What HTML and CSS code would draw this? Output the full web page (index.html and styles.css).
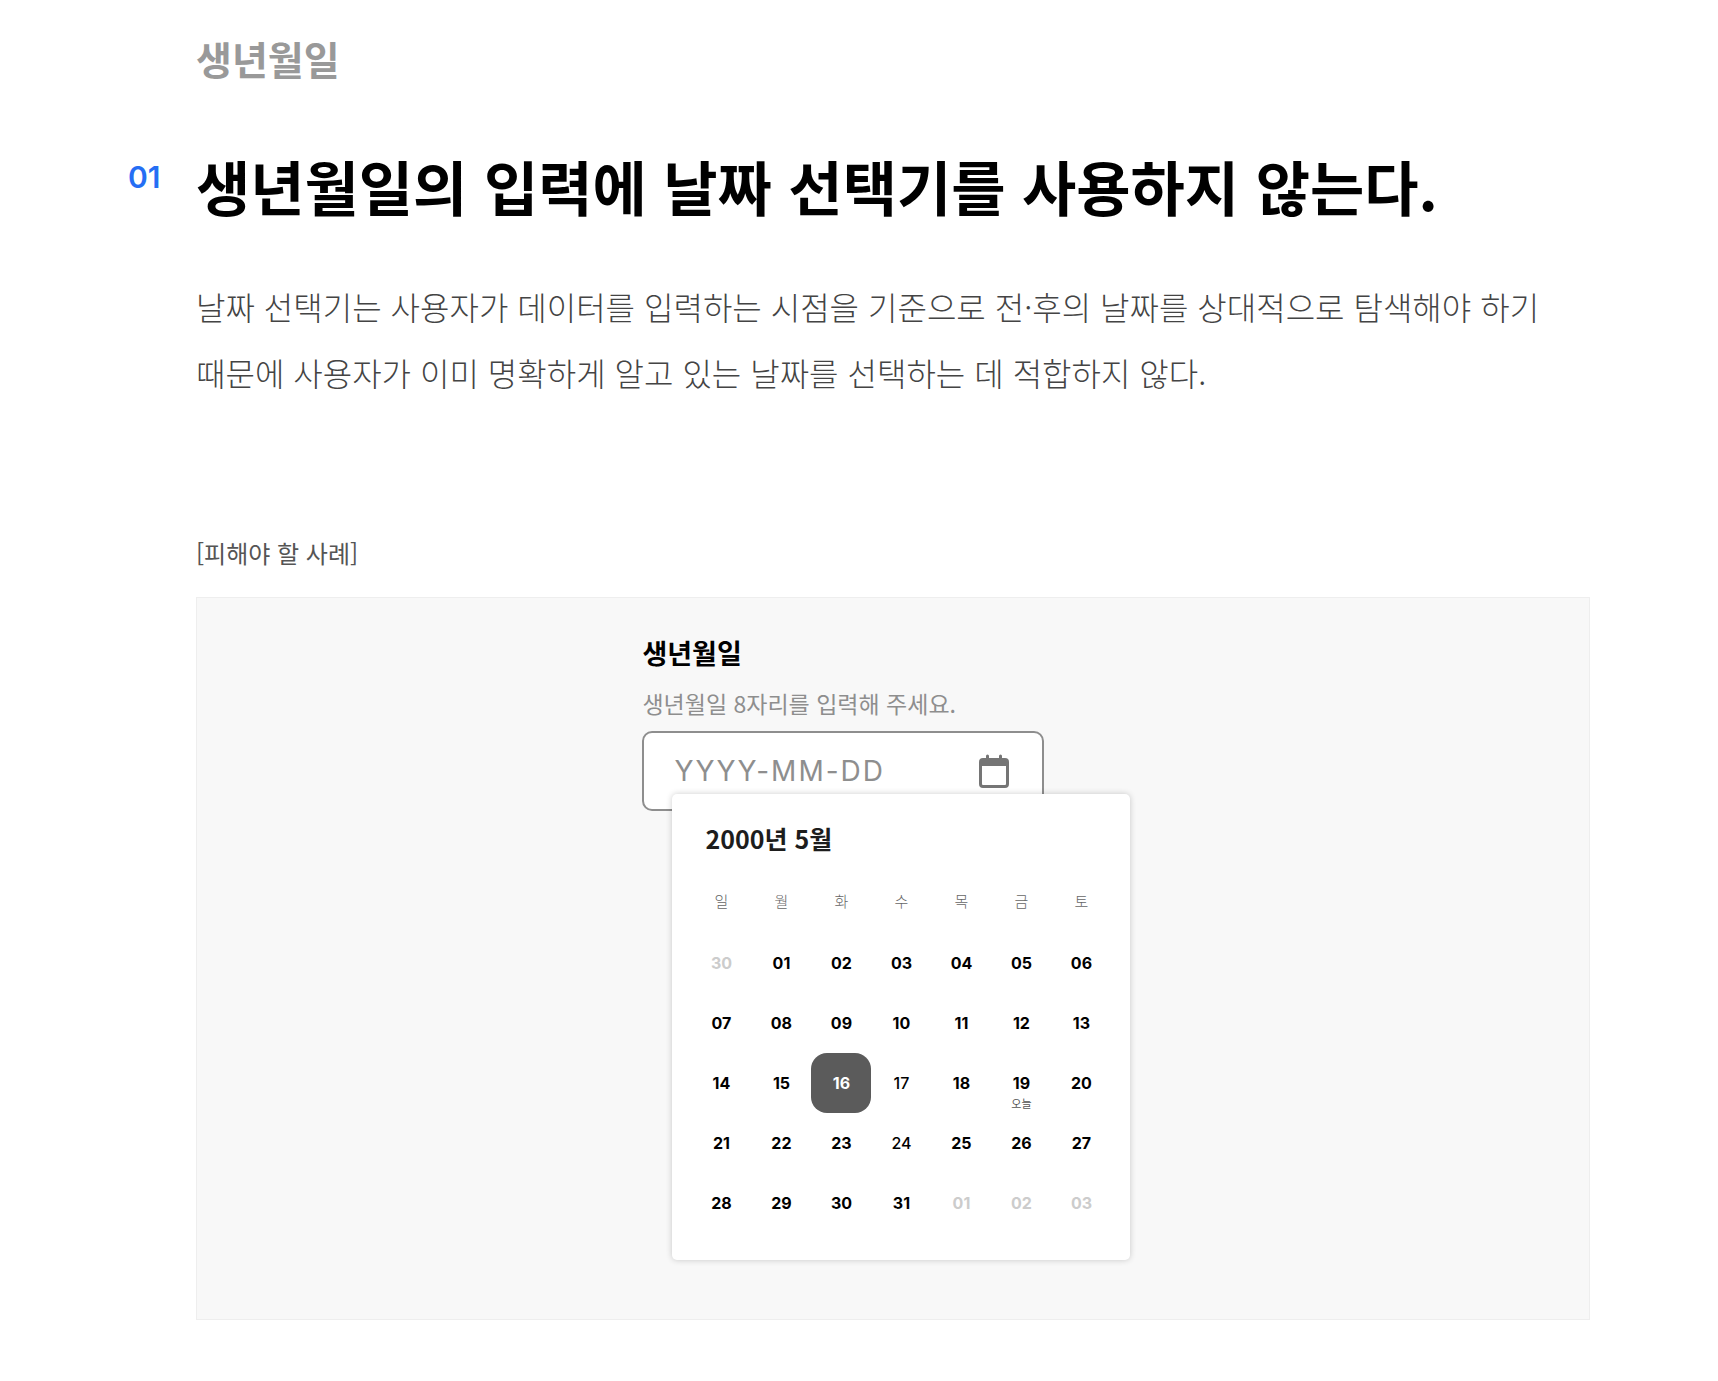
FILE: index.html
```html
<!DOCTYPE html>
<html lang="ko">

<head>
    <meta charset="UTF-8">
    <meta name="viewport" content="width=device-width, initial-scale=1.0">
    <title>생년월일</title>
    <link rel="stylesheet" href="styles.css">
</head>

<body>
    <main class="page">
        <h2 class="category">생년월일</h2>

        <section class="rule">
            <span class="rule-number">01</span>
            <h1>생년월일의 입력에 날짜 선택기를 사용하지 않는다.</h1>
            <p class="description">날짜 선택기는 사용자가 데이터를 입력하는 시점을 기준으로 전·후의 날짜를 상대적으로 탐색해야 하기 때문에 사용자가 이미 명확하게 알고 있는 날짜를 선택하는 데 적합하지 않다.</p>
        </section>

        <figure class="example">
            <figcaption>[피해야 할 사례]</figcaption>
            <div class="panel">
                <div class="picker">
                    <label for="birth">생년월일</label>
                    <p class="hint" id="birth-hint">생년월일 8자리를 입력해 주세요.</p>
                    <div class="field">
                        <input type="text" id="birth" placeholder="YYYY-MM-DD" aria-describedby="birth-hint">
                        <button type="button" class="open" aria-label="달력 열기">
                            <svg width="30" height="34" viewBox="0 0 30 34">
                                <path fill="#757575" fill-rule="evenodd" d="M7 2a1.500 1.500 0 0 1 3 0v2h10V2a1.500 1.500 0 0 1 3 0v2h3a4 4 0 0 1 4 4v22a4 4 0 0 1-4 4H4a4 4 0 0 1-4-4V8a4 4 0 0 1 4-4h3zM3 12v18a1 1 0 0 0 1 1h22a1 1 0 0 0 1-1V12z" />
                            </svg>
                        </button>
                    </div>

                    <div class="calendar">
                        <h3>2000년 5월</h3>
                        <table>
                            <thead>
                                <tr>
                                    <th>일</th>
                                    <th>월</th>
                                    <th>화</th>
                                    <th>수</th>
                                    <th>목</th>
                                    <th>금</th>
                                    <th>토</th>
                                </tr>
                            </thead>
                            <tbody>
                                <tr>
                                    <td><button type="button" class="other">30</button></td>
                                    <td><button type="button">01</button></td>
                                    <td><button type="button">02</button></td>
                                    <td><button type="button">03</button></td>
                                    <td><button type="button">04</button></td>
                                    <td><button type="button">05</button></td>
                                    <td><button type="button">06</button></td>
                                </tr>
                                <tr>
                                    <td><button type="button">07</button></td>
                                    <td><button type="button">08</button></td>
                                    <td><button type="button">09</button></td>
                                    <td><button type="button">10</button></td>
                                    <td><button type="button">11</button></td>
                                    <td><button type="button">12</button></td>
                                    <td><button type="button">13</button></td>
                                </tr>
                                <tr>
                                    <td><button type="button">14</button></td>
                                    <td><button type="button">15</button></td>
                                    <td><button type="button" class="selected">16</button></td>
                                    <td><button type="button" class="plain">17</button></td>
                                    <td><button type="button">18</button></td>
                                    <td><button type="button">19<span class="today">오늘</span></button></td>
                                    <td><button type="button">20</button></td>
                                </tr>
                                <tr>
                                    <td><button type="button">21</button></td>
                                    <td><button type="button">22</button></td>
                                    <td><button type="button">23</button></td>
                                    <td><button type="button" class="plain">24</button></td>
                                    <td><button type="button">25</button></td>
                                    <td><button type="button">26</button></td>
                                    <td><button type="button">27</button></td>
                                </tr>
                                <tr>
                                    <td><button type="button">28</button></td>
                                    <td><button type="button">29</button></td>
                                    <td><button type="button">30</button></td>
                                    <td><button type="button">31</button></td>
                                    <td><button type="button" class="other">01</button></td>
                                    <td><button type="button" class="other">02</button></td>
                                    <td><button type="button" class="other">03</button></td>
                                </tr>
                            </tbody>
                        </table>
                    </div>
                </div>
            </div>
        </figure>
    </main>
</body>

</html>
```

FILE: styles.css
```css
* {
    box-sizing: border-box;
}

body {
    margin: 0;
    background-color: white;
    color: #000;
    font-family: "Noto Sans CJK KR", sans-serif;
}

h1,
h2,
h3,
p,
figure {
    margin: 0;
}

.page {
    padding: 28px 128px 60px 196px;
}

.category {
    color: #999;
    font-size: 39px;
    line-height: 60px;
}

.rule {
    position: relative;
    margin-top: 54px;
}

/* number hangs in the left margin, next to the heading */
.rule-number {
    position: absolute;
    top: 15px;
    left: -68px;
    color: #256ef4;
    font-family: Inter, sans-serif;
    font-size: 30px;
    font-weight: 600;
    line-height: 40px;
}

h1 {
    font-size: 59px;
    line-height: 88px;
}

.description {
    margin-top: 43px;
    color: #444;
    font-size: 32px;
    font-weight: 300;
    line-height: 66px;
    word-break: keep-all;
}

.example {
    margin-top: 130px;
}

figcaption {
    color: #555;
    font-size: 24px;
    line-height: 36px;
}

.panel {
    margin-top: 26px;
    padding: 35px 0 59px;
    background-color: #f8f8f8;
    border: 1px solid #eee;
}

.picker {
    width: 490px;
    margin-left: 32%;
}

.picker label {
    display: block;
    font-size: 27px;
    font-weight: 700;
    line-height: 40px;
}

.hint {
    margin-top: 12px;
    color: #8e8e8e;
    font-size: 23px;
    line-height: 36px;
}

.field {
    display: flex;
    align-items: center;
    width: 402px;
    height: 80px;
    margin-top: 10px;
    padding: 0 33px 0 30px;
    background-color: white;
    border: 2px solid #8e8e8e;
    border-radius: 10px;
}

.field input {
    flex: 1;
    min-width: 0;
    padding: 0;
    border: none;
    outline: none;
    background: none;
    font-family: Inter, sans-serif;
    font-size: 28px;
    letter-spacing: 2px;
}

.field input::placeholder {
    color: #8e8e8e;
}

.open {
    padding: 0;
    border: none;
    background: none;
    cursor: pointer;
}

.open svg {
    display: block;
}

/* the calendar covers the bottom edge of the field */
.calendar {
    position: relative;
    width: 458px;
    margin: -17px 0 0 30px;
    padding: 26px 19px 27px;
    background-color: white;
    border-radius: 5px;
    box-shadow: 0 0 6px rgba(0, 0, 0, 0.2);
}

.calendar h3 {
    padding-left: 14px;
    color: #1d1d1d;
    font-size: 25px;
    font-weight: 700;
    line-height: 36px;
}

.calendar table {
    width: 100%;
    margin-top: 17px;
    table-layout: fixed;
    border-collapse: collapse;
}

.calendar th {
    height: 60px;
    padding: 0 0 6px;
    color: #666;
    font-size: 15px;
    font-weight: 300;
}

.calendar td {
    padding: 0;
}

.calendar td button {
    position: relative;
    display: block;
    width: 60px;
    height: 60px;
    padding: 0;
    border: none;
    border-radius: 16px;
    background: none;
    color: #000;
    font-family: Inter, sans-serif;
    font-size: 16px;
    font-weight: 700;
    cursor: pointer;
}

.calendar td .other {
    color: #ccc;
}

.calendar td .plain {
    font-weight: 500;
}

.calendar td .selected {
    background-color: #5b5b5b;
    color: white;
}

.today {
    position: absolute;
    left: 0;
    right: 0;
    bottom: 2px;
    color: #555;
    font-family: "Noto Sans CJK KR", sans-serif;
    font-size: 11px;
    font-weight: 400;
}
```
